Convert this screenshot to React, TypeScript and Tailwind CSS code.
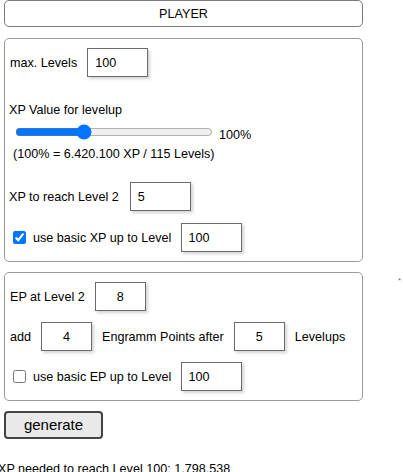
import React, { useState } from 'react';

const inputCls =
  'h-[29px] border border-[#6b6b6b] bg-white text-[12.6px] text-black outline-none shadow-[2px_2px_3px_rgba(0,0,0,0.18)]';

const App: React.FC = () => {
  const [maxLevels, setMaxLevels] = useState('100');
  const [xpValue, setXpValue] = useState(100);
  const [xpLevel2, setXpLevel2] = useState('5');
  const [useBasicXp, setUseBasicXp] = useState(true);
  const [basicXpLevel, setBasicXpLevel] = useState('100');
  const [epLevel2, setEpLevel2] = useState('8');
  const [addEp, setAddEp] = useState('4');
  const [afterLevels, setAfterLevels] = useState('5');
  const [useBasicEp, setUseBasicEp] = useState(false);
  const [basicEpLevel, setBasicEpLevel] = useState('100');

  return (
    <div className="w-[403px] h-[472px] overflow-hidden bg-white text-[12.6px] text-black font-['Liberation_Sans',Arial,sans-serif] leading-4">
      <div className="flex">
        <div className="ml-[4px] w-[359px] flex flex-col">
          {/* header */}
          <div className="h-[27px] border border-[#7a7a7a] rounded-[5px] flex items-center justify-center">
            PLAYER
          </div>

          {/* xp panel */}
          <div className="mt-[11px] border border-[#9a9a9a] rounded-[5px] pl-[4px] pt-[9px] pb-[9px] flex flex-col">
            <div className="flex items-center gap-[10px]">
              <span className="ml-[1px]">max. Levels</span>
              <input
                className={`${inputCls} w-[61px] pl-[7px]`}
                value={maxLevels}
                onChange={(e) => setMaxLevels(e.target.value)}
              />
            </div>

            <div className="mt-[25px]">XP Value for levelup</div>
            <div className="flex items-center h-[16px] mt-[6px]">
              <input
                type="range"
                min={0}
                max={300}
                value={xpValue}
                onChange={(e) => setXpValue(Number(e.target.value))}
                className="ml-[6px] w-[198px] m-0 accent-[#0075ff]"
              />
              <span className="ml-[6px] mt-[6px]">{xpValue}%</span>
            </div>
            <div className="mt-[6px] ml-[4px]">(100% = 6.420.100 XP / 115 Levels)</div>

            <div className="flex items-center gap-[11px] mt-[20px]">
              <span>XP to reach Level 2</span>
              <input
                className={`${inputCls} w-[61px] pl-[7px]`}
                value={xpLevel2}
                onChange={(e) => setXpLevel2(e.target.value)}
              />
            </div>

            <div className="flex items-center mt-[12px]">
              <input
                type="checkbox"
                checked={useBasicXp}
                onChange={(e) => setUseBasicXp(e.target.checked)}
                className="ml-[4px] w-[13px] h-[13px] accent-[#0075ff]"
              />
              <span className="ml-[7px]">use basic XP up to Level</span>
              <input
                className={`${inputCls} ml-[10px] w-[61px] pl-[6px]`}
                value={basicXpLevel}
                onChange={(e) => setBasicXpLevel(e.target.value)}
              />
            </div>
          </div>

          {/* ep panel */}
          <div className="mt-[10px] border border-[#9a9a9a] rounded-[5px] pl-[4px] pt-[9px] pb-[9px] flex flex-col gap-[11px]">
            <div className="flex items-center gap-[10px]">
              <span className="ml-[1px]">EP at Level 2</span>
              <input
                className={`${inputCls} w-[51px] text-center`}
                value={epLevel2}
                onChange={(e) => setEpLevel2(e.target.value)}
              />
            </div>
            <div className="flex items-center gap-[10px]">
              <span className="ml-[1px]">add</span>
              <input
                className={`${inputCls} w-[51px] text-center`}
                value={addEp}
                onChange={(e) => setAddEp(e.target.value)}
              />
              <span>Engramm Points after</span>
              <input
                className={`${inputCls} w-[51px] text-center`}
                value={afterLevels}
                onChange={(e) => setAfterLevels(e.target.value)}
              />
              <span>Levelups</span>
            </div>
            <div className="flex items-center">
              <input
                type="checkbox"
                checked={useBasicEp}
                onChange={(e) => setUseBasicEp(e.target.checked)}
                className="ml-[4px] w-[13px] h-[13px] accent-[#0075ff]"
              />
              <span className="ml-[7px]">use basic EP up to Level</span>
              <input
                className={`${inputCls} ml-[10px] w-[61px] pl-[6px]`}
                value={basicEpLevel}
                onChange={(e) => setBasicEpLevel(e.target.value)}
              />
            </div>
          </div>

          <button className="mt-[10px] w-[99px] h-[28px] border-2 border-[#444] rounded-[4px] bg-[#e9e9e9] text-[15px] text-black">
            generate
          </button>
        </div>

        <div className="ml-[35px] mt-[277px] text-[8px] leading-none text-[#a06080]">*</div>
      </div>

      <div className="mt-[22px] -ml-[2px] whitespace-nowrap">XP needed to reach Level 100: 1.798.538</div>
    </div>
  );
};

export default App;
